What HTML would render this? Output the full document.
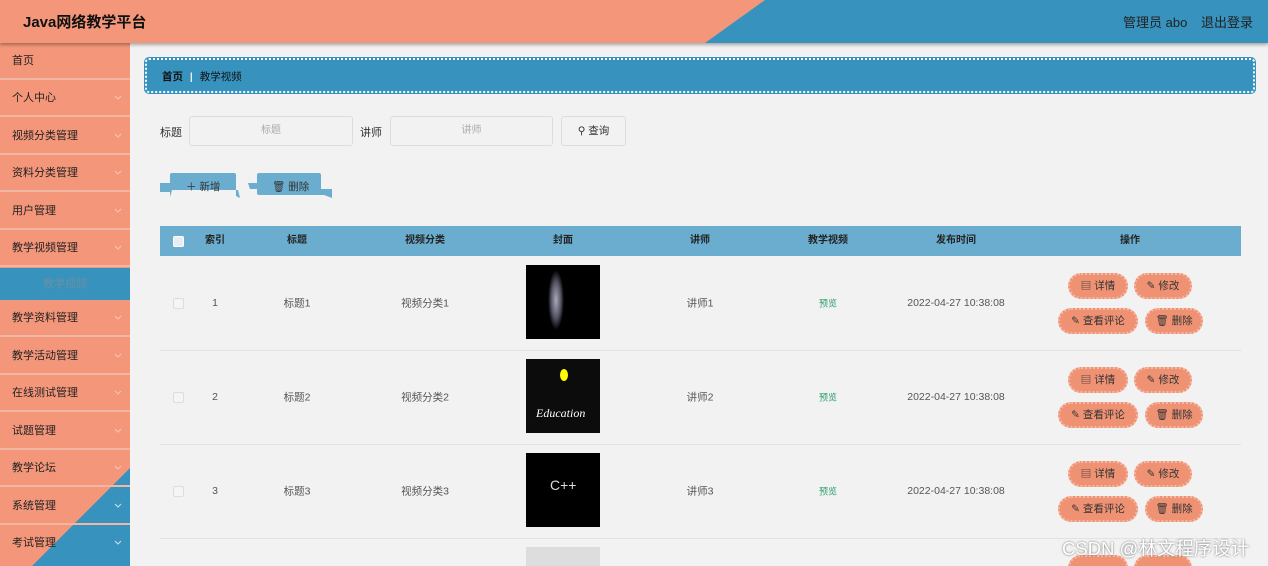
<!DOCTYPE html>
<html style="width:1268px;height:566px;overflow:hidden"><head><meta charset="utf-8"><style>
*{margin:0;padding:0;box-sizing:border-box}
body{width:1268px;height:566px;overflow:hidden;background:#f2f2f2;font-family:"Liberation Sans","Noto Sans CJK SC",sans-serif;font-size:11px;color:#333;position:relative}
.a{position:absolute}
.hdr{left:0;top:0;width:1268px;height:43px;background:#3793be;overflow:hidden;box-shadow:0 2px 3px rgba(0,0,0,.3);z-index:2}
.side{left:0;top:43px;width:130px;height:523px;background:#f4967a;overflow:hidden}
.it{position:absolute;left:0;width:130px;height:37px;border-bottom:2px solid #f1b7a5;padding-left:12px;line-height:36px;font-size:11px;color:#222}
.it svg{position:absolute;right:8px;top:15px}
.th{top:226px;left:160px;width:1081px;height:30px;background:#6aadce}
.thc{position:absolute;top:0;line-height:30px;font-weight:bold;color:#222;transform:translateX(-50%);font-size:10px}
.td{position:absolute;transform:translate(-50%,-50%);font-size:10.5px;color:#555}
.row{position:absolute;left:160px;width:1081px;border-bottom:1px solid #e2e2e2}
.cb{position:absolute;width:11px;height:11px;border:1px solid #ddd;background:#f5f5f5;border-radius:2px}
.btn{position:absolute;height:26px;background:#ef9274;border:2px dotted #f5b8a3;border-radius:14px;line-height:22px;text-align:center;font-size:10.5px;color:#333}
.img{position:absolute;left:526px;width:74px;height:74px;background:#000;overflow:hidden}
</style></head><body>
<div class="a hdr">
<svg class="a" style="left:0;top:0" width="1268" height="43"><polygon points="0,0 765,0 705,43 0,43" fill="#f4967a"/></svg>
<div class="a" style="left:23px;top:11px;font-size:15px;font-weight:bold;color:#111">Java网络教学平台</div>
<div class="a" style="left:1123px;top:12px;font-size:13px;color:#222">管理员 abo</div>
<div class="a" style="left:1201px;top:12px;font-size:13px;color:#222">退出登录</div>
</div>
<div class="a side">
<svg class="a" style="left:0;top:0" width="130" height="523"><polygon points="130,425 130,523 32,523" fill="#3793be"/></svg>
<div class="it" style="top:0">首页</div>
<div class="it" style="top:37px">个人中心<svg width="8" height="5"><path d="M1,1 L4,4 L7,1" stroke="#f8c6b6" fill="none"/></svg></div>
<div class="it" style="top:75px">视频分类管理<svg width="8" height="5"><path d="M1,1 L4,4 L7,1" stroke="#f8c6b6" fill="none"/></svg></div>
<div class="it" style="top:112px">资料分类管理<svg width="8" height="5"><path d="M1,1 L4,4 L7,1" stroke="#f8c6b6" fill="none"/></svg></div>
<div class="it" style="top:150px">用户管理<svg width="8" height="5"><path d="M1,1 L4,4 L7,1" stroke="#f8c6b6" fill="none"/></svg></div>
<div class="it" style="top:187px">教学视频管理<svg width="8" height="5"><path d="M1,1 L4,4 L7,1" stroke="#f8c6b6" fill="none"/></svg></div>
<div class="it" style="top:225px;height:32px;background:#3793be;border:0;text-align:center;padding:0;line-height:32px;color:#6c8fa3">教学视频</div>
<div class="it" style="top:257px">教学资料管理<svg width="8" height="5"><path d="M1,1 L4,4 L7,1" stroke="#f8c6b6" fill="none"/></svg></div>
<div class="it" style="top:295px">教学活动管理<svg width="8" height="5"><path d="M1,1 L4,4 L7,1" stroke="#f8c6b6" fill="none"/></svg></div>
<div class="it" style="top:332px">在线测试管理<svg width="8" height="5"><path d="M1,1 L4,4 L7,1" stroke="#f8c6b6" fill="none"/></svg></div>
<div class="it" style="top:370px">试题管理<svg width="8" height="5"><path d="M1,1 L4,4 L7,1" stroke="#f8c6b6" fill="none"/></svg></div>
<div class="it" style="top:407px;background:transparent">教学论坛<svg width="8" height="5"><path d="M1,1 L4,4 L7,1" stroke="#f8c6b6" fill="none"/></svg></div>
<div class="it" style="top:445px;background:transparent">系统管理<svg width="8" height="5"><path d="M1,1 L4,4 L7,1" stroke="#cfe3ee" fill="none"/></svg></div>
<div class="it" style="top:482px;background:transparent;border:0">考试管理<svg width="8" height="5"><path d="M1,1 L4,4 L7,1" stroke="#cfe3ee" fill="none"/></svg></div>
</div>
<div class="a" style="left:145px;top:58px;width:1110px;height:35px;background:#3793be;border:2px dotted #fff;outline:1px solid #3793be;border-radius:4px"></div>
<div class="a" style="left:162px;top:69px;font-weight:bold;font-size:10.5px;color:#111">首页 <span style="color:#eee;margin:0 4px">|</span> <span style="font-weight:normal">教学视频</span></div>
<div class="a" style="left:160px;top:124px">标题</div>
<div class="a" style="left:189px;top:116px;width:164px;height:30px;border:1px solid #ddd;border-radius:3px;background:#f2f2f2;text-align:center;line-height:28px;color:#aaa;font-size:10px">标题</div>
<div class="a" style="left:360px;top:124px">讲师</div>
<div class="a" style="left:390px;top:116px;width:163px;height:30px;border:1px solid #ddd;border-radius:3px;background:#f2f2f2;text-align:center;line-height:28px;color:#aaa;font-size:10px">讲师</div>
<div class="a" style="left:561px;top:116px;width:65px;height:30px;border:1px solid #ddd;border-radius:3px;text-align:center;line-height:28px;font-size:10.5px">⚲ 查询</div>
<svg class="a" style="left:158px;top:172px" width="176" height="28"><path d="M2,11 H12 V3 Q12,1 14,1 H76 Q78,1 78,3 V24 L82,26 L80,18 H66 H14 Q12,26 12,24 V20 H2 Z" fill="#6aadce"/><path d="M90,11 H99 V3 Q99,1 101,1 H161 Q163,1 163,3 V17 H174 V26 L166,23 H101 Q99,23 99,21 V17 H92 Z" fill="#6aadce"/></svg>
<div class="a" style="left:186px;top:179px;font-size:10.5px">＋ 新增</div>
<div class="a" style="left:272px;top:179px;font-size:10.5px">🗑 删除</div>
<div class="a th">
<div class="cb" style="left:13px;top:10px;background:#e8ecf3;border-color:#fff"></div>
<div class="thc" style="left:55px">索引</div><div class="thc" style="left:137px">标题</div><div class="thc" style="left:265px">视频分类</div><div class="thc" style="left:403px">封面</div><div class="thc" style="left:540px">讲师</div><div class="thc" style="left:668px">教学视频</div><div class="thc" style="left:796px">发布时间</div><div class="thc" style="left:970px">操作</div>
</div>
<div class="row" style="top:256px;height:95px"></div>
<div class="row" style="top:351px;height:94px"></div>
<div class="row" style="top:445px;height:94px"></div>
<div class="img" style="top:265px;background:radial-gradient(ellipse 8px 30px at 30px 35px,#aab 0,#556 60%,#000 100%)"></div>
<div class="img" style="top:359px;background:#0c0c0c"><div class="a" style="left:10px;top:47px;color:#fff;font-family:'Liberation Serif';font-style:italic;font-size:12px">Education</div><div class="a" style="left:34px;top:10px;width:8px;height:12px;background:#ff0;border-radius:50%"></div></div>
<div class="img" style="top:453px;background:#000"><div class="a" style="left:24px;top:24px;color:#ddd;font-size:14px">C++</div></div>
<div class="img" style="top:547px;background:#ddd;height:19px"></div>
<div class="cb" style="left:173px;top:298px"></div><div class="cb" style="left:173px;top:392px"></div><div class="cb" style="left:173px;top:486px"></div>
<div class="td" style="left:215px;top:303px">1</div><div class="td" style="left:297px;top:303px">标题1</div><div class="td" style="left:425px;top:303px">视频分类1</div><div class="td" style="left:700px;top:303px">讲师1</div><div class="td" style="left:828px;top:303px;color:#2a9d6a;font-size:9px">预览</div><div class="td" style="left:956px;top:303px">2022-04-27 10:38:08</div>
<div class="td" style="left:215px;top:397px">2</div><div class="td" style="left:297px;top:397px">标题2</div><div class="td" style="left:425px;top:397px">视频分类2</div><div class="td" style="left:700px;top:397px">讲师2</div><div class="td" style="left:828px;top:397px;color:#2a9d6a;font-size:9px">预览</div><div class="td" style="left:956px;top:397px">2022-04-27 10:38:08</div>
<div class="td" style="left:215px;top:491px">3</div><div class="td" style="left:297px;top:491px">标题3</div><div class="td" style="left:425px;top:491px">视频分类3</div><div class="td" style="left:700px;top:491px">讲师3</div><div class="td" style="left:828px;top:491px;color:#2a9d6a;font-size:9px">预览</div><div class="td" style="left:956px;top:491px">2022-04-27 10:38:08</div>
<div class="btn" style="left:1068px;top:273px;width:60px">▤ 详情</div><div class="btn" style="left:1134px;top:273px;width:58px">✎ 修改</div>
<div class="btn" style="left:1058px;top:308px;width:80px">✎ 查看评论</div><div class="btn" style="left:1145px;top:308px;width:58px">🗑 删除</div>
<div class="btn" style="left:1068px;top:367px;width:60px">▤ 详情</div><div class="btn" style="left:1134px;top:367px;width:58px">✎ 修改</div>
<div class="btn" style="left:1058px;top:402px;width:80px">✎ 查看评论</div><div class="btn" style="left:1145px;top:402px;width:58px">🗑 删除</div>
<div class="btn" style="left:1068px;top:461px;width:60px">▤ 详情</div><div class="btn" style="left:1134px;top:461px;width:58px">✎ 修改</div>
<div class="btn" style="left:1058px;top:496px;width:80px">✎ 查看评论</div><div class="btn" style="left:1145px;top:496px;width:58px">🗑 删除</div>
<div class="btn" style="left:1068px;top:555px;width:60px"></div><div class="btn" style="left:1134px;top:555px;width:58px"></div>
<div class="a" style="left:1062px;top:535px;font-size:18.5px;color:#fff;text-shadow:0 0 2px #666;white-space:nowrap">CSDN @林文程序设计</div>
</body></html>
